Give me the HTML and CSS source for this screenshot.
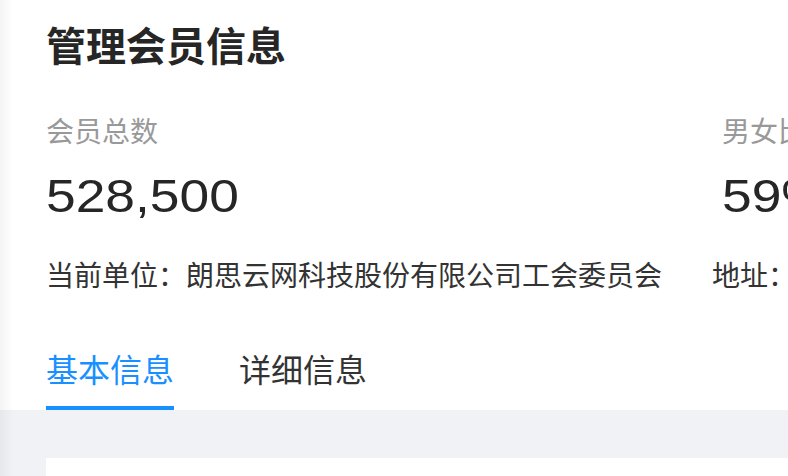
FILE: index.html
```html
<!DOCTYPE html>
<html lang="zh-CN">
<head>
    <meta charset="UTF-8">
    <meta name="viewport" content="width=device-width, initial-scale=1.0">
    <title>管理会员信息</title>
    <link rel="stylesheet" href="styles.css">
</head>
<body>
    <div class="member-page">
        <div class="member-header">
            <h1>管理会员信息</h1>

            <div class="stats">
                <div class="stat">
                    <div class="stat-label">会员总数</div>
                    <div class="stat-value"><span>528,500</span></div>
                </div>
                <div class="stat">
                    <div class="stat-label">男女比例</div>
                    <div class="stat-value"><span>59%</span></div>
                </div>
            </div>

            <div class="unit-info">
                <span class="unit-name">当前单位：朗思云网科技股份有限公司工会委员会</span>
                <span class="unit-address">地址：</span>
            </div>

            <div class="tabs">
                <a class="tab active">基本信息</a>
                <a class="tab">详细信息</a>
            </div>
        </div>

        <div class="member-body">
            <div class="card"></div>
        </div>
    </div>
</body>
</html>
```

FILE: styles.css
```css
html, body {
    margin: 0;
    height: 100%;
    overflow: hidden;
}

body {
    font-family: "Noto Sans CJK SC", "Liberation Sans", sans-serif;
    background-color: #fff;
    color: #333;
    position: relative;
}

/* soft shadow from the side menu */
body::before {
    content: "";
    position: absolute;
    top: 0;
    left: 0;
    bottom: 0;
    width: 14px;
    background: linear-gradient(to right, rgba(0, 0, 0, 0.045), rgba(0, 0, 0, 0));
    pointer-events: none;
    z-index: 2;
}

.member-page {
    display: flex;
    flex-direction: column;
    height: 100%;
    min-width: 1100px;
}

.member-header {
    padding: 16px 0 0 46px;
    background-color: #fff;
}

.member-header h1 {
    margin: 0;
    font-size: 40px;
    line-height: 56px;
    font-weight: 700;
    color: #262626;
}

.stats {
    display: flex;
    margin-top: 38px;
}

.stat {
    flex: 0 0 676px;
}

.stat-label {
    font-size: 28px;
    line-height: 40px;
    color: #999;
}

.stat-value {
    margin-top: 18px;
    font-family: "Liberation Sans", sans-serif;
    font-size: 46px;
    line-height: 56px;
    color: #262626;
}

/* the numbers use a wider face than Arial */
.stat-value span {
    display: inline-block;
    transform: scaleX(1.16);
    transform-origin: left center;
}

.unit-info {
    display: flex;
    margin-top: 30px;
    font-size: 28px;
    line-height: 40px;
    color: #333;
    white-space: nowrap;
}

.unit-name {
    margin-right: 50px;
}

.tabs {
    display: flex;
    gap: 65px;
    margin-top: 52px;
}

.tab {
    font-size: 32px;
    line-height: 44px;
    padding-bottom: 16px;
    color: #333;
    border-bottom: 4px solid transparent;
    cursor: pointer;
}

.tab.active {
    color: #1890ff;
    border-bottom-color: #1890ff;
}

.member-body {
    flex: 1;
    background-color: #f0f2f5;
    padding: 48px 0 0 46px;
}

.card {
    height: 100%;
    background-color: #fff;
}
```
